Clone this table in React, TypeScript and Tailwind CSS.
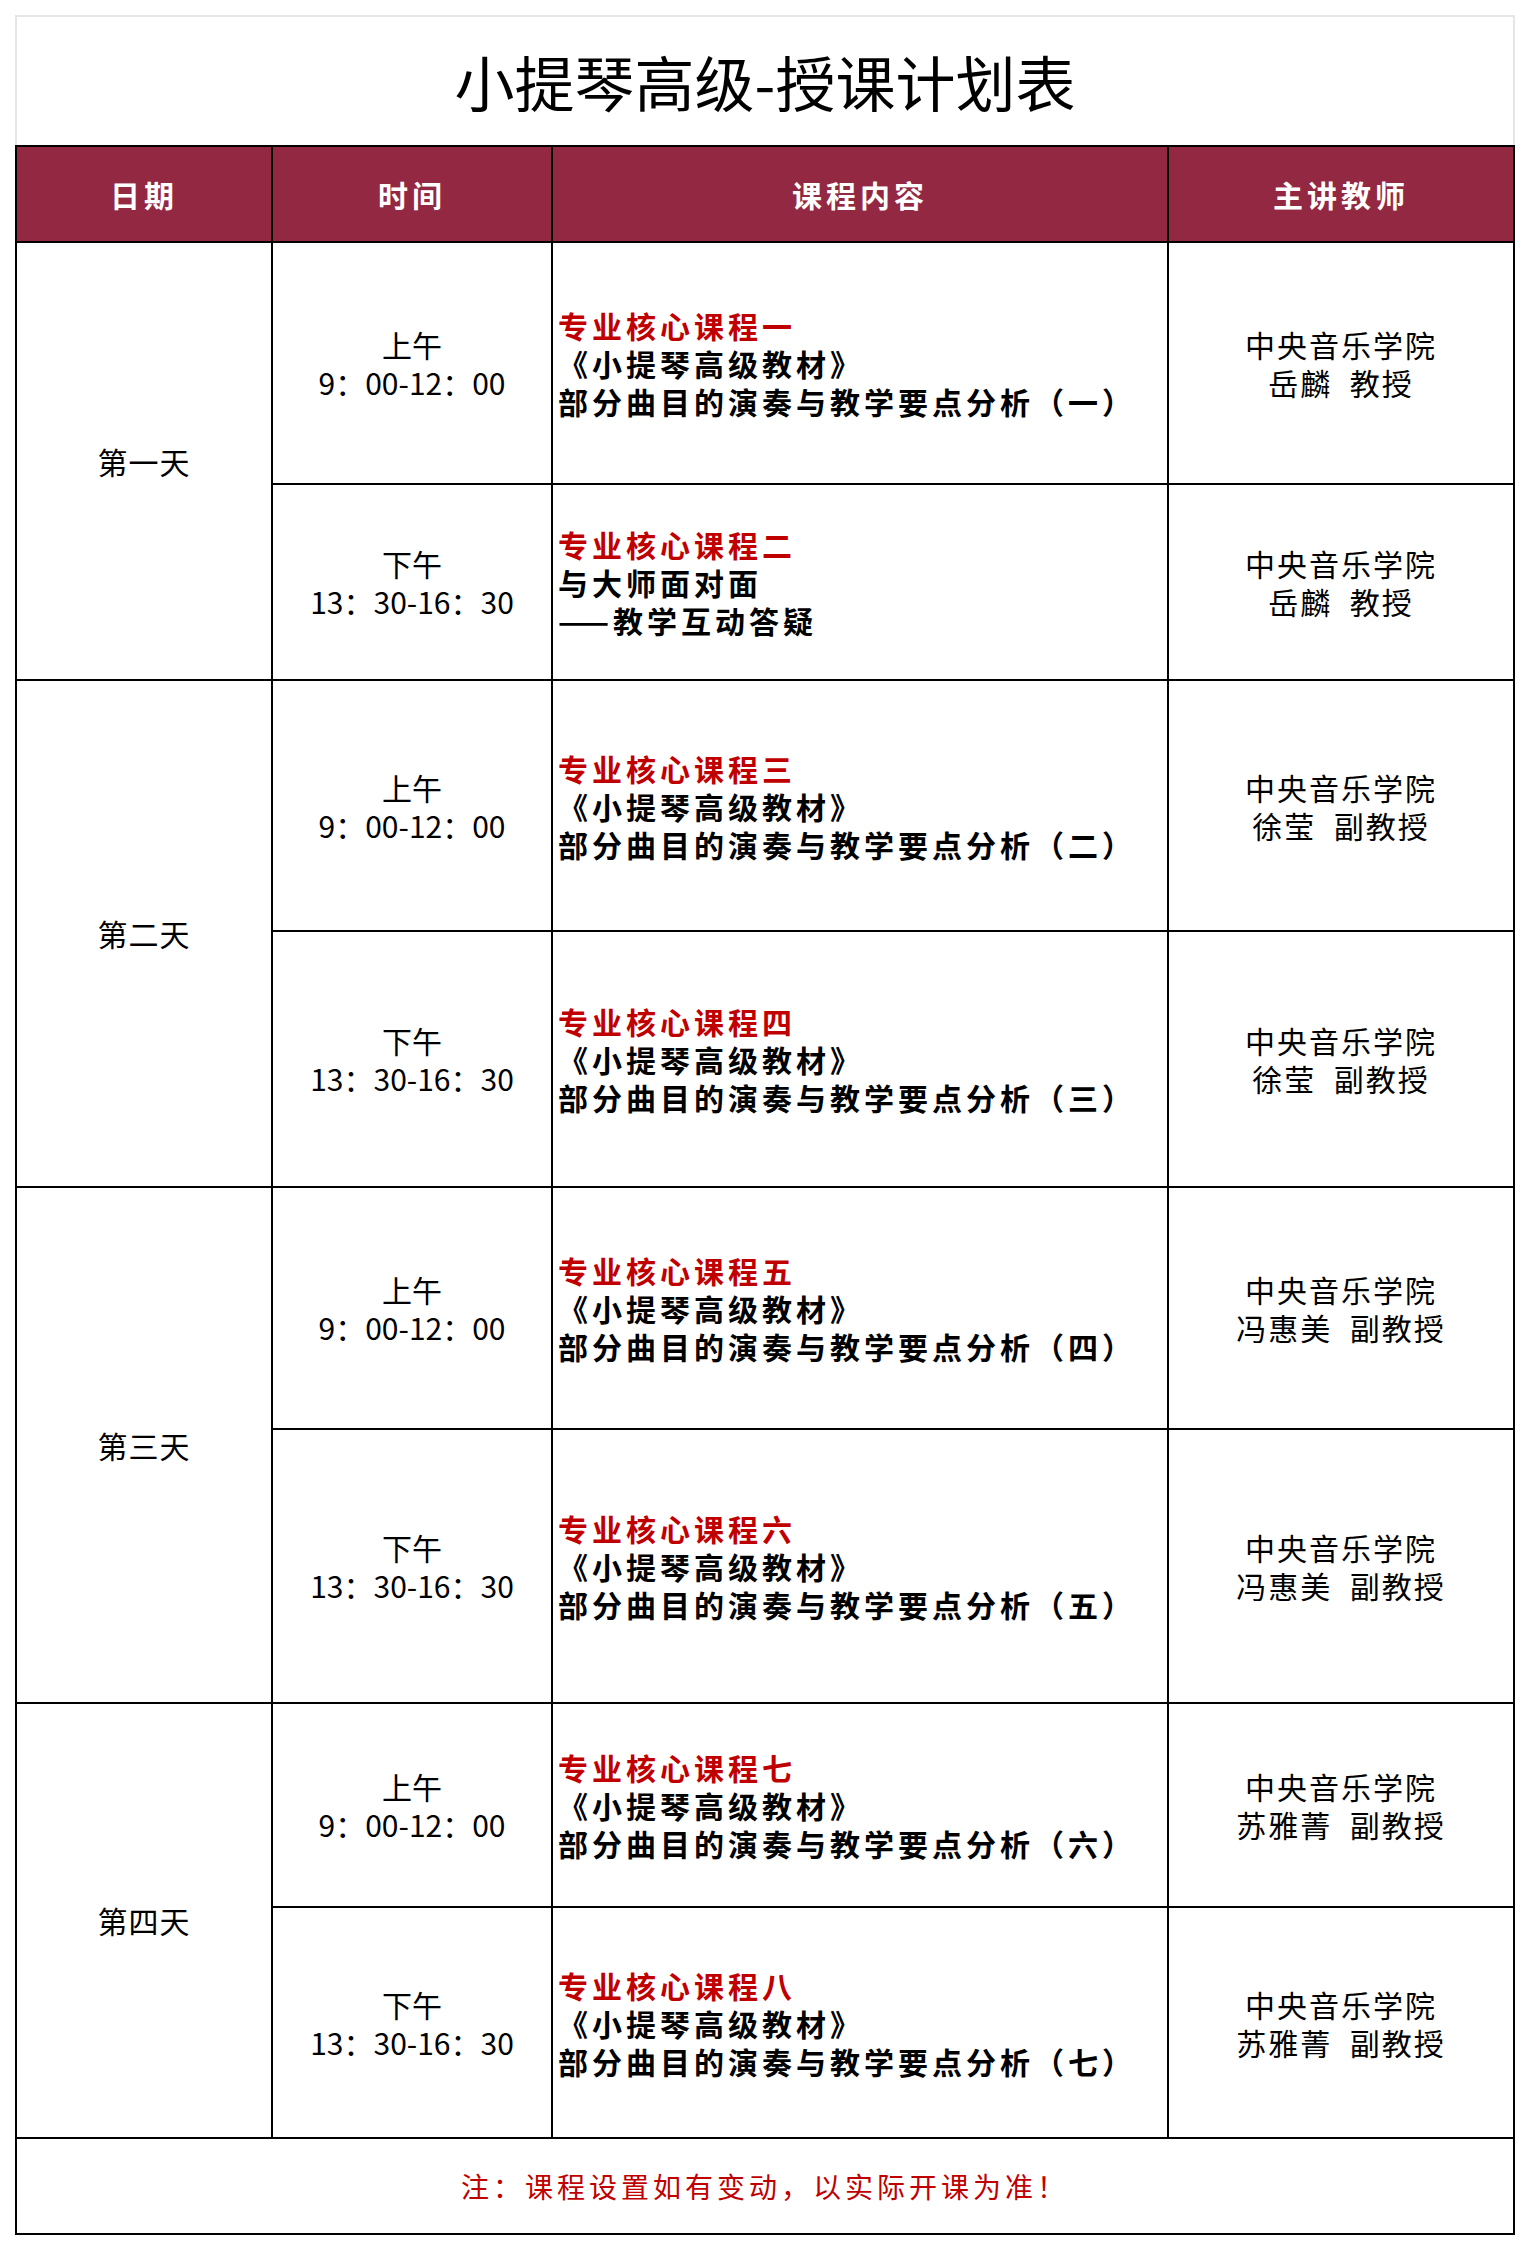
import React from "react";

type Slot = {
  period: string;
  time: string;
  title: string;
  lines: string[];
  teacher: string;
};

type Day = { day: string; slots: Slot[] };

const AM = "9：00-12：00";
const PM = "13：30-16：30";
const BOOK = "《小提琴高级教材》";
const part = (n: string) => `部分曲目的演奏与教学要点分析（${n}）`;

const days: Day[] = [
  {
    day: "第一天",
    slots: [
      { period: "上午", time: AM, title: "专业核心课程一", lines: [BOOK, part("一")], teacher: "岳麟  教授" },
      { period: "下午", time: PM, title: "专业核心课程二", lines: ["与大师面对面", "——教学互动答疑"], teacher: "岳麟  教授" },
    ],
  },
  {
    day: "第二天",
    slots: [
      { period: "上午", time: AM, title: "专业核心课程三", lines: [BOOK, part("二")], teacher: "徐莹  副教授" },
      { period: "下午", time: PM, title: "专业核心课程四", lines: [BOOK, part("三")], teacher: "徐莹  副教授" },
    ],
  },
  {
    day: "第三天",
    slots: [
      { period: "上午", time: AM, title: "专业核心课程五", lines: [BOOK, part("四")], teacher: "冯惠美  副教授" },
      { period: "下午", time: PM, title: "专业核心课程六", lines: [BOOK, part("五")], teacher: "冯惠美  副教授" },
    ],
  },
  {
    day: "第四天",
    slots: [
      { period: "上午", time: AM, title: "专业核心课程七", lines: [BOOK, part("六")], teacher: "苏雅菁  副教授" },
      { period: "下午", time: PM, title: "专业核心课程八", lines: [BOOK, part("七")], teacher: "苏雅菁  副教授" },
    ],
  },
];

const headers = ["日期", "时间", "课程内容", "主讲教师"];

export default function App() {
  return (
    <div className="bg-white min-h-[2250px] pt-[15px] pl-[15px] font-['Noto_Sans_CJK_SC',sans-serif] text-black">
      <div className="w-[1500px]">
        <div className="h-[130px] border-t-2 border-x-2 border-[#e6e6e6] flex items-center justify-center">
          <h1 className="text-[60px] leading-none font-normal text-black">小提琴高级-授课计划表</h1>
        </div>
        <div className="grid grid-cols-[254px_278px_614px_344px] grid-rows-[94px_240px_194px_249px_254px_240px_272px_202px_229px_94px] gap-[2px] p-[2px] bg-black">
          {headers.map((h) => (
            <div
              key={h}
              className="bg-[#932842] flex items-center justify-center text-white font-bold text-[30px] tracking-[4px]"
            >
              {h}
            </div>
          ))}
          {days.map((d) => (
            <React.Fragment key={d.day}>
              <div className="row-span-2 bg-white flex items-center justify-center text-[30px] tracking-[1px]">
                {d.day}
              </div>
              {d.slots.map((s, i) => (
                <React.Fragment key={i}>
                  <div className="bg-white flex flex-col items-center justify-center text-[30px] leading-[38px]">
                    <span className="block">{s.period}</span>
                    <span className="block">{s.time}</span>
                  </div>
                  <div className="bg-white flex flex-col justify-center pl-[5px] text-[30px] leading-[38px] font-bold tracking-[4px]">
                    <span className="block text-[#c00000]">{s.title}</span>
                    {s.lines.map((l, j) => (
                      <span key={j} className="block">
                        {l}
                      </span>
                    ))}
                  </div>
                  <div className="bg-white flex flex-col items-center justify-center text-[30px] leading-[38px] tracking-[2px]">
                    <span className="block">中央音乐学院</span>
                    <span className="block whitespace-pre">{s.teacher}</span>
                  </div>
                </React.Fragment>
              ))}
            </React.Fragment>
          ))}
          <div className="col-span-4 bg-white flex items-center justify-center text-[#c00000] text-[28px] tracking-[4px]">
            注：课程设置如有变动，以实际开课为准！
          </div>
        </div>
      </div>
    </div>
  );
}
